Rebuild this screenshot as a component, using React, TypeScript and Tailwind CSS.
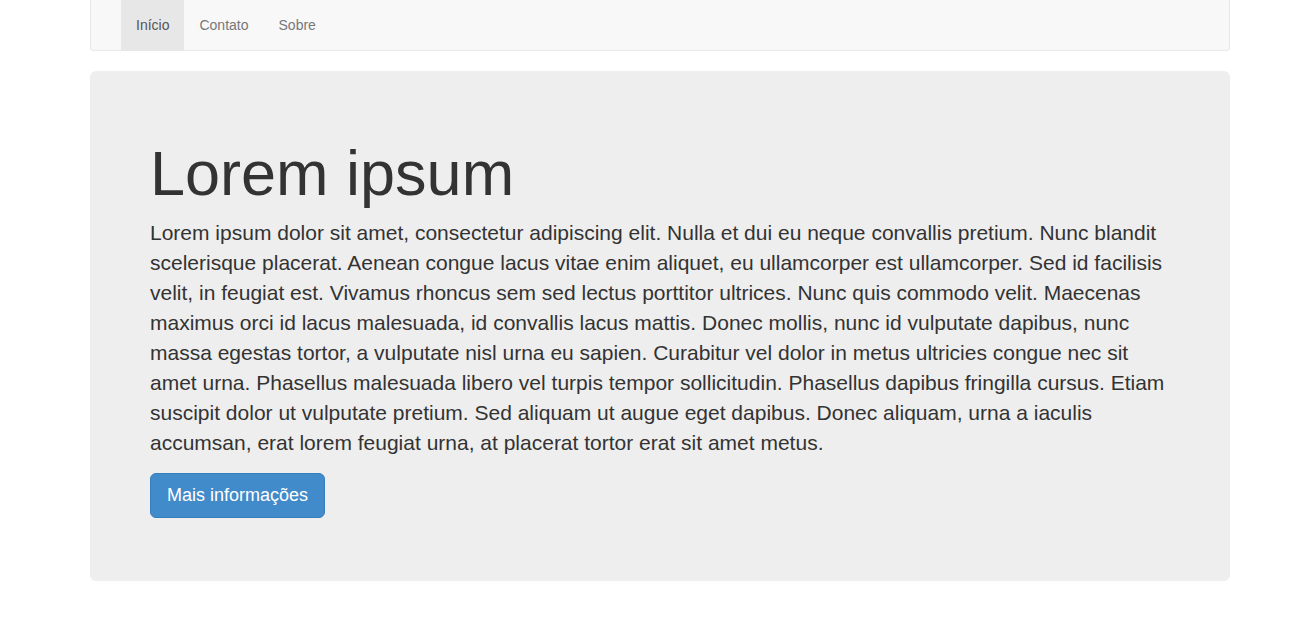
import React from "react";

export default function App() {
  const font = { fontFamily: '"Liberation Sans", Arial, Helvetica, sans-serif' };
  return (
    <div className="min-h-screen bg-white text-[#333]" style={font}>
      <div className="ml-[75px] w-[1170px] px-[15px]">
        <nav className="h-[51px] border border-t-0 border-[#e7e7e7] bg-[#f8f8f8] rounded-b-[4px] pl-[30px] flex">
          <a className="block h-[50px] px-[15px] py-[15px] text-[14px] leading-[20px] bg-[#e7e7e7] text-[#555]">Início</a>
          <a className="block h-[50px] px-[15px] py-[15px] text-[14px] leading-[20px] text-[#777]">Contato</a>
          <a className="block h-[50px] px-[15px] py-[15px] text-[14px] leading-[20px] text-[#777]">Sobre</a>
        </nav>
        <div className="mt-[20px] bg-[#eee] rounded-[6px] px-[60px] pt-[48px] pb-[48px]">
          <h1 className="mt-[20px] mb-[10px] text-[63px] leading-[69px] text-[#333]">Lorem ipsum</h1>
          <p className="mb-[15px] text-[21px] leading-[30px] text-[#333]">
            Lorem ipsum dolor sit amet, consectetur adipiscing elit. Nulla et dui eu neque convallis pretium. Nunc blandit scelerisque placerat. Aenean congue lacus vitae enim aliquet, eu ullamcorper est ullamcorper. Sed id facilisis velit, in feugiat est. Vivamus rhoncus sem sed lectus porttitor ultrices. Nunc quis commodo velit. Maecenas maximus orci id lacus malesuada, id convallis lacus mattis. Donec mollis, nunc id vulputate dapibus, nunc massa egestas tortor, a vulputate nisl urna eu sapien. Curabitur vel dolor in metus ultricies congue nec sit amet urna. Phasellus malesuada libero vel turpis tempor sollicitudin. Phasellus dapibus fringilla cursus. Etiam suscipit dolor ut vulputate pretium. Sed aliquam ut augue eget dapibus. Donec aliquam, urna a iaculis accumsan, erat lorem feugiat urna, at placerat tortor erat sit amet metus.
          </p>
          <p className="mb-[15px]">
            <a className="inline-block bg-[#428bca] border border-[#357ebd] text-white text-[18px] leading-[23px] px-[16px] pt-[10px] pb-[10px] rounded-[6px]">
              Mais informações
            </a>
          </p>
        </div>
      </div>
    </div>
  );
}
